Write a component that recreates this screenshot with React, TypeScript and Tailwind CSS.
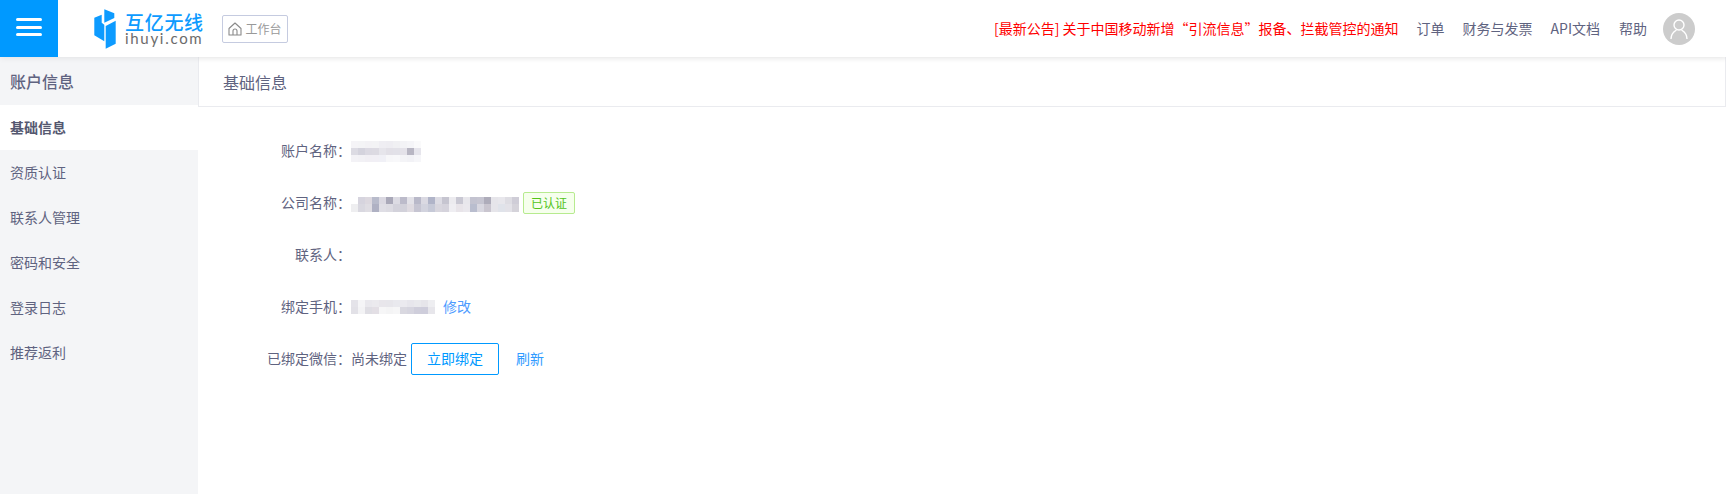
const text = 'text-[#5f6380]';

const sideItems = ['基础信息', '资质认证', '联系人管理', '密码和安全', '登录日志', '推荐返利'];

const accountBlur = [
  ['#f5f4f7', '#f4f4f6', '#f3f2f5', '#f3f3f5', '#efeef3', '#eeedf2', '#f0f0f3', '#f3f3f6', '#f5f5f8', '#fafafb'],
  ['#dcdbe3', '#d4d3dd', '#dbd9e2', '#dcdae2', '#e6e5eb', '#e2e0e7', '#e2e1e8', '#e4e2e9', '#b8b6c3', '#e6e5ec'],
  ['#f3f2f6', '#f2f1f5', '#f1eff4', '#f1eff5', '#f0f0f6', '#f7f7f9', '#f8f8fa', '#f4f4f7', '#f2f2f6', '#f6f6f9'],
];

const companyBlur = [
  ['#ffffff', '#d6d4de', '#dcd8df', '#b8bbcb', '#dad8e1', '#a9a8b8', '#dcdbe3', '#bcbbca', '#e3e2e8', '#b9b9c9', '#dad9e2', '#b0b4c8', '#dddce4', '#c6c5d0', '#ecebef', '#c9c8d3', '#e8e7ec', '#c3c3d0', '#c6c5d1', '#aeacba', '#e6e5ea', '#e8e7ec', '#dedde3', '#cfcdd7'],
  ['#eeeef0', '#d9d8e0', '#dfdde3', '#afb1c3', '#dfdee5', '#dcdbe2', '#d3d2db', '#d2d1da', '#dfdbe1', '#c6c5d2', '#d2d3de', '#c6c9d7', '#d8d6de', '#d5d3dc', '#efeef2', '#e8e4e9', '#eae8ed', '#b9bdce', '#d8d7e0', '#c9c5cf', '#e6e5ea', '#e0e3ea', '#e3e2e8', '#d5d3da'],
];

const phoneBlur = [
  ['#e4e3e9', '#f5f5f7', '#e9e8ed', '#ebeaee', '#e8e6eb', '#e7e6eb', '#e9e9ee', '#ebeaef', '#e7e6ec', '#e9e9ed', '#e6e5ea', '#eeeef1'],
  ['#e2e1e7', '#f3f3f5', '#dfdee4', '#e3dfe5', '#f6f6f7', '#f4f4f5', '#f6f6f7', '#d9d8e0', '#d6d5df', '#cfcedb', '#cecddb', '#e7e6eb'],
];

function BlurPatch({ rows, cell, h }: { rows: string[][]; cell: number; h: number }) {
  return (
    <div className="flex flex-col blur-[0.5px]">
      {rows.map((row, i) => (
        <div key={i} className="flex">
          {row.map((c, j) => (
            <div key={j} style={{ background: c, width: cell, height: h }} />
          ))}
        </div>
      ))}
    </div>
  );
}

function Logo() {
  return (
    <div className="flex items-center ml-[36px] w-[128px]">
      <svg width="22" height="40" viewBox="0 0 22 40" className="shrink-0 mt-[1px]">
        <path d="M10.3 0.3 L20.3 4.3 L20.3 9 L10.3 13.7 Z" fill="#0d9bff" />
        <path d="M0.3 8.7 L7.7 5.7 L7.7 13.7 L10.3 15.7 L10.3 32.3 L0.3 26.3 Z" fill="#0d9bff" />
        <path d="M11.7 17 L21.7 11.7 L21.7 34.7 L11.7 39.7 Z" fill="#0d9bff" />
      </svg>
      <div className="ml-[9px] flex flex-col items-start">
        <span className="text-[19px] leading-[19px] font-medium tracking-[0.7px] text-[#0d9bff] whitespace-nowrap">互亿无线</span>
        <span className="text-[15px] leading-[14px] tracking-[1.7px] text-[#6b6b6b] font-['Lato',sans-serif]">ihuyi.com</span>
      </div>
    </div>
  );
}

function Row({ label, children }: { label: string; children?: React.ReactNode }) {
  return (
    <div className="flex items-center h-[52px]">
      <div className={`w-[153px] pb-[2px] text-right text-[14px] ${text}`}>{label}</div>
      {children}
    </div>
  );
}

export default function App() {
  return (
    <div className="w-[1726px] h-[494px] bg-white flex flex-col font-['Noto_Sans_CJK_SC','Liberation_Sans',sans-serif] overflow-hidden">
      <header className="h-[57px] shrink-0 flex items-center shadow-[0_1px_6px_rgba(0,0,0,0.08)] relative z-10 bg-white">
        <div className="w-[58px] h-full pb-[3px] bg-[#0099ff] flex flex-col items-center justify-center gap-[4.5px]">
          <span className="w-[26px] h-[3px] rounded-full bg-white" />
          <span className="w-[26px] h-[3px] rounded-full bg-white" />
          <span className="w-[26px] h-[3px] rounded-full bg-white" />
        </div>
        <Logo />
        <div className="flex items-center justify-center gap-[3px] w-[66px] h-[28px] border border-[#c5cbe0] rounded-[2px] text-[12px] text-[#999999]">
          <svg width="14" height="14" viewBox="0 0 14 14" fill="none" stroke="#8a8a8a" strokeWidth="1.1">
            <path d="M1 6.5 L7 1 L13 6.5 V13 H1 Z" strokeLinejoin="round" />
            <path d="M5 13 V9 a2 2 0 0 1 4 0 V13" />
          </svg>
          工作台
        </div>
        <div className={`ml-auto flex items-center text-[14px] ${text}`}>
          <span className="text-[#ff0000]">[最新公告] 关于中国移动新增“引流信息”报备、拦截管控的通知</span>
          <span className="ml-[18px]">订单</span>
          <span className="ml-[18px]">财务与发票</span>
          <span className="ml-[18px]">API文档</span>
          <span className="ml-[19px]">帮助</span>
          <div className="ml-[16px] mr-[31px] w-[32px] h-[32px] rounded-full bg-[#cccccc] flex items-center justify-center">
            <svg width="20" height="22" viewBox="0 0 20 22" fill="none" stroke="#ffffff" strokeWidth="1.4">
              <circle cx="10" cy="7" r="5" />
              <path d="M2 21 C2 15 6 13 7.5 12 M18 21 C18 15 14 13 12.5 12" />
            </svg>
          </div>
        </div>
      </header>
      <div className="flex flex-1 min-h-0">
        <aside className="w-[198px] shrink-0 bg-[#f4f5f7]">
          <div className={`h-[48px] pl-[10px] flex items-center text-[16px] font-medium ${text}`}>账户信息</div>
          {sideItems.map((item, i) => (
            <div
              key={item}
              className={`h-[45px] pl-[10px] flex items-center text-[14px] ${i === 0 ? 'bg-white font-bold text-[#555870]' : text}`}
            >
              {item}
            </div>
          ))}
        </aside>
        <main className="flex-1">
          <div className={`h-[50px] pl-[24px] flex items-center text-[16px] border border-t-0 border-[#eaebef] shadow-[inset_0_6px_6px_-6px_rgba(0,0,0,0.06)] ${text}`}>
            基础信息
          </div>
          <div className="pt-[18px]">
            <Row label="账户名称：">
              <BlurPatch rows={accountBlur} cell={7} h={7} />
            </Row>
            <Row label="公司名称：">
              <div className="mt-[2px]">
                <BlurPatch rows={companyBlur} cell={7} h={7.5} />
              </div>
              <span className="ml-[4px] h-[22px] px-[7px] flex items-center border border-[#b7eb8f] bg-[#f6ffed] rounded-[2px] text-[12px] text-[#52c41a]">已认证</span>
            </Row>
            <Row label="联系人：" />
            <Row label="绑定手机：">
              <BlurPatch rows={phoneBlur} cell={7} h={7} />
              <span className="ml-[8px] pb-[2px] text-[14px] text-[#4d9bff]">修改</span>
            </Row>
            <Row label="已绑定微信：">
              <span className={`pb-[2px] text-[14px] ${text}`}>尚未绑定</span>
              <span className="ml-[4px] w-[88px] h-[32px] pb-[1px] flex items-center justify-center border border-[#0099ff] rounded-[2px] text-[14px] text-[#0099ff]">立即绑定</span>
              <span className="ml-[17px] pb-[2px] text-[14px] text-[#2f9bff]">刷新</span>
            </Row>
          </div>
        </main>
      </div>
    </div>
  );
}
